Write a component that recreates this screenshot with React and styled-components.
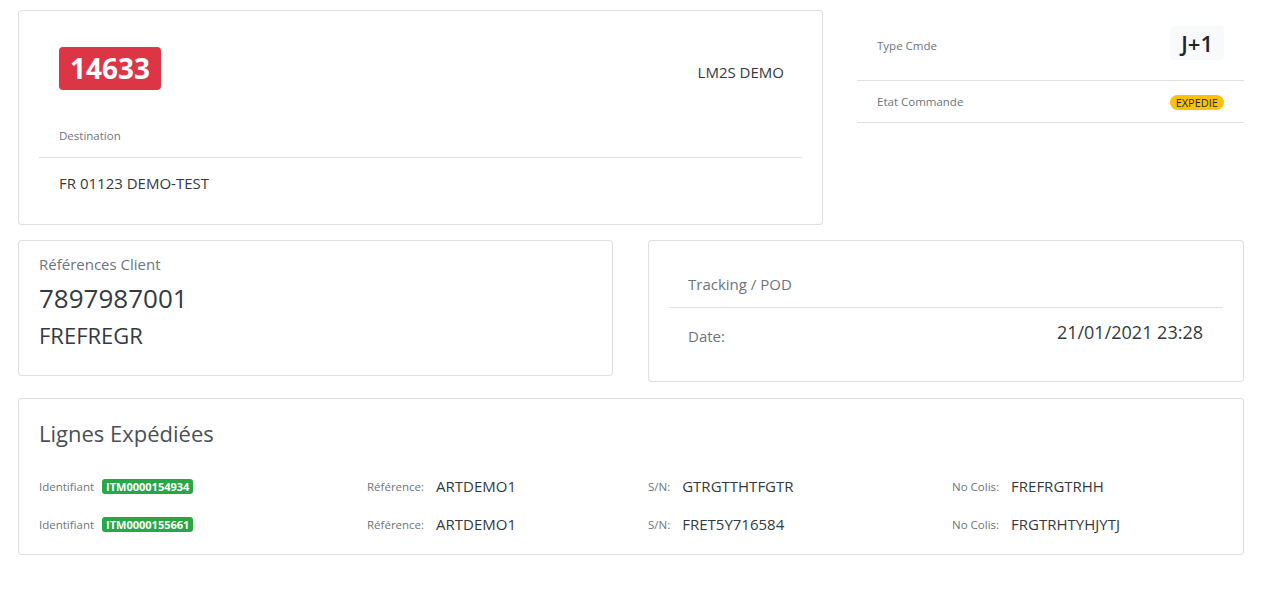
import React from 'react'
import styled, { createGlobalStyle } from 'styled-components';

const GlobalStyle = createGlobalStyle`
  body {
    margin: 0;
    background: #fff;
    font-family: "Open Sans", "Noto Sans", sans-serif;
    color: #343a40;
  }
`;

const Page = styled.div`
  padding: 10px 29px 40px 18px;
  display: flex;
  flex-direction: column;
`;

const TopRow = styled.div`
  display: grid;
  grid-template-columns: 805px 1fr;
  column-gap: 34px;
  align-items: start;
  margin-bottom: 15px;
`;

const HalfRow = styled.div`
  display: grid;
  grid-template-columns: 595px 1fr;
  column-gap: 35px;
  align-items: start;
  margin-bottom: 16px;
`;

const Card = styled.div`
  border: 1px solid rgba(0, 0, 0, 0.125);
  border-radius: 4px;
  background: #fff;
  padding: ${p => p.$pad || '20px'};
`;

const OrderHead = styled.div`
  display: flex;
  justify-content: space-between;
  align-items: center;
  padding: 16px 18px 0 20px;
`;

const OrderNo = styled.span`
  display: inline-block;
  background: #dc3545;
  color: #fff;
  font-weight: 700;
  font-size: 28px;
  line-height: 43px;
  padding: 0 11px;
  border-radius: 4px;
`;

const Company = styled.span`
  font-size: 15px;
  color: #343a40;
  margin-top: 6px;
`;

const SmallLabel = styled.div`
  font-size: 11.5px;
  line-height: 18px;
  color: #6c757d;
  padding: ${p => p.$pad || '0'};
  margin-top: ${p => p.$mt || '0'};
`;

const Divider = styled.hr`
  border: 0;
  border-top: 1px solid #dee2e6;
  margin: ${p => p.$m || '0'};
`;

const Address = styled.div`
  font-size: 15px;
  line-height: 22px;
  padding: 0 20px 10px;
  color: #343a40;
`;

const InfoList = styled.div`
  display: flex;
  flex-direction: column;
`;

const InfoItem = styled.div`
  display: flex;
  justify-content: space-between;
  align-items: center;
  padding: ${p => p.$pad};
  border-bottom: 1px solid #dee2e6;
`;

const TypeBadge = styled.span`
  background: #f8f9fa;
  color: #212529;
  font-weight: 600;
  font-size: 22px;
  line-height: 34px;
  padding: 0 11px;
  border-radius: 4px;
`;

const Pill = styled.span`
  background: ${p => p.$bg};
  color: ${p => p.$fg};
  font-size: 11px;
  font-weight: ${p => p.$weight || 400};
  line-height: 15px;
  padding: 0 ${p => p.$px || '6px'};
  border-radius: ${p => p.$radius || '8px'};
`;

const Muted = styled.div`
  font-size: 15px;
  line-height: 22px;
  color: #6c757d;
`;

const BigValue = styled.div`
  font-size: ${p => p.$size};
  line-height: ${p => p.$lh};
  margin-top: ${p => p.$mt};
  color: #343a40;
`;

const TrackHead = styled.div`
  padding: 12px 19px 12px;
  border-bottom: 1px solid #dee2e6;
`;

const TrackRow = styled.div`
  display: flex;
  justify-content: space-between;
  align-items: flex-start;
  padding: 11px 20px 14px 19px;
`;

const DateLabel = styled(Muted)`
  margin-top: 6px;
`;

const DateValue = styled.div`
  font-size: 18px;
  line-height: 26px;
  color: #343a40;
`;

const Title = styled.h4`
  margin: 0 0 19px;
  font-weight: 400;
  font-size: 22px;
  line-height: 30px;
  color: #495057;
`;

const LineRow = styled.div`
  display: grid;
  grid-template-columns: 328px 281px 304px 1fr;
  align-items: center;
  height: 38px;
`;

const Field = styled.div`
  display: flex;
  align-items: center;
  gap: ${p => p.$gap || '12px'};
`;

const FieldLabel = styled.span`
  font-size: 11.5px;
  color: #6c757d;
`;

const FieldValue = styled.span`
  font-size: 15px;
  color: #343a40;
`;

const lines = [
  { id: 'ITM0000154934', ref: 'ARTDEMO1', sn: 'GTRGTTHTFGTR', colis: 'FREFRGTRHH' },
  { id: 'ITM0000155661', ref: 'ARTDEMO1', sn: 'FRET5Y716584', colis: 'FRGTRHTYHJYTJ' },
];

const App = () => {
  return (
    <>
      <GlobalStyle />
      <Page>
        <TopRow>
          <Card>
            <OrderHead>
              <OrderNo>14633</OrderNo>
              <Company>LM2S DEMO</Company>
            </OrderHead>
            <SmallLabel $pad="37px 20px 0">Destination</SmallLabel>
            <Divider $m="12px 0 14px" />
            <Address>FR 01123 DEMO-TEST</Address>
          </Card>
          <InfoList>
            <InfoItem $pad="16px 20px 20px">
              <SmallLabel $mt="5px">Type Cmde</SmallLabel>
              <TypeBadge>J+1</TypeBadge>
            </InfoItem>
            <InfoItem $pad="12px 20px 11px">
              <SmallLabel>Etat Commande</SmallLabel>
              <Pill $bg="#ffc107" $fg="#212529">EXPEDIE</Pill>
            </InfoItem>
          </InfoList>
        </TopRow>

        <HalfRow>
          <Card $pad="12px 20px 25px">
            <Muted>Références Client</Muted>
            <BigValue $size="26px" $lh="32px" $mt="7px">7897987001</BigValue>
            <BigValue $size="22px" $lh="30px" $mt="6px">FREFREGR</BigValue>
          </Card>
          <Card>
            <TrackHead>
              <Muted>Tracking / POD</Muted>
            </TrackHead>
            <TrackRow>
              <DateLabel>Date:</DateLabel>
              <DateValue>21/01/2021 23:28</DateValue>
            </TrackRow>
          </Card>
        </HalfRow>

        <Card $pad="19px 20px 11px">
          <Title>Lignes Expédiées</Title>
          {lines.map(line => (
            <LineRow key={line.id}>
              <Field $gap="8px">
                <FieldLabel>Identifiant</FieldLabel>
                <Pill $bg="#28a745" $fg="#fff" $weight={700} $px="4px" $radius="3px">{line.id}</Pill>
              </Field>
              <Field>
                <FieldLabel>Référence:</FieldLabel>
                <FieldValue>{line.ref}</FieldValue>
              </Field>
              <Field>
                <FieldLabel>S/N:</FieldLabel>
                <FieldValue>{line.sn}</FieldValue>
              </Field>
              <Field>
                <FieldLabel>No Colis:</FieldLabel>
                <FieldValue>{line.colis}</FieldValue>
              </Field>
            </LineRow>
          ))}
        </Card>
      </Page>
    </>
  )
}

export default App
